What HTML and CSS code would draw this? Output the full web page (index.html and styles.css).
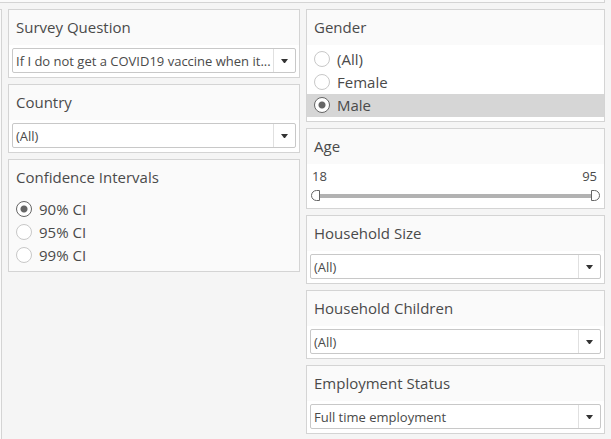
FILE: index.html
```html
<!DOCTYPE html>
<html lang="en">
<head>
<meta charset="utf-8">
<title>Survey filters</title>
<link rel="stylesheet" href="styles.css">
</head>
<body>
<div class="top-edge"></div>
<main class="dashboard">
  <div class="side-edge"></div>
  <div class="column column-left">
    <section class="panel">
      <label class="title" for="question">Survey Question</label>
      <div class="body">
        <div class="dropdown">
          <select id="question"><option>If I do not get a COVID19 vaccine when it...</option></select>
          <span class="arrow"><svg width="7" height="4" viewBox="0 0 7 4"><path d="M0 0h7L4 4H3z"/></svg></span>
        </div>
      </div>
    </section>
    <section class="panel">
      <label class="title" for="country">Country</label>
      <div class="body">
        <div class="dropdown">
          <select id="country"><option>(All)</option></select>
          <span class="arrow"><svg width="7" height="4" viewBox="0 0 7 4"><path d="M0 0h7L4 4H3z"/></svg></span>
        </div>
      </div>
    </section>
    <section class="panel" role="radiogroup" aria-labelledby="ci-title">
      <h2 class="title" id="ci-title">Confidence Intervals</h2>
      <div class="body body-plain">
        <label class="choice"><input type="radio" name="ci" checked>90% CI</label>
        <label class="choice"><input type="radio" name="ci">95% CI</label>
        <label class="choice"><input type="radio" name="ci">99% CI</label>
      </div>
    </section>
  </div>
  <div class="column column-right">
    <section class="panel" role="radiogroup" aria-labelledby="gender-title">
      <h2 class="title" id="gender-title">Gender</h2>
      <div class="body">
        <label class="choice"><input type="radio" name="gender">(All)</label>
        <label class="choice"><input type="radio" name="gender">Female</label>
        <label class="choice choice-active"><input type="radio" name="gender" checked>Male</label>
      </div>
    </section>
    <section class="panel">
      <h2 class="title">Age</h2>
      <div class="body">
        <div class="range-values">
          <label for="age-min">18</label>
          <label for="age-max">95</label>
        </div>
        <div class="range">
          <input class="range-min" id="age-min" type="range" min="18" max="95" value="18">
          <input class="range-max" id="age-max" type="range" min="18" max="95" value="95">
        </div>
      </div>
    </section>
    <section class="panel">
      <label class="title" for="size">Household Size</label>
      <div class="body">
        <div class="dropdown">
          <select id="size"><option>(All)</option></select>
          <span class="arrow"><svg width="7" height="4" viewBox="0 0 7 4"><path d="M0 0h7L4 4H3z"/></svg></span>
        </div>
      </div>
    </section>
    <section class="panel">
      <label class="title" for="children">Household Children</label>
      <div class="body">
        <div class="dropdown">
          <select id="children"><option>(All)</option></select>
          <span class="arrow"><svg width="7" height="4" viewBox="0 0 7 4"><path d="M0 0h7L4 4H3z"/></svg></span>
        </div>
      </div>
    </section>
    <section class="panel">
      <label class="title" for="employment">Employment Status</label>
      <div class="body">
        <div class="dropdown">
          <select id="employment"><option>Full time employment</option></select>
          <span class="arrow"><svg width="7" height="4" viewBox="0 0 7 4"><path d="M0 0h7L4 4H3z"/></svg></span>
        </div>
      </div>
    </section>
  </div>
</main>
</body>
</html>
```
FILE: styles.css
```css
* {
  box-sizing: border-box;
}

body {
  display: flex;
  flex-direction: column;
  min-height: 100vh;
  margin: 0;
  background: #f5f5f5;
  color: #4a4a4a;
  font-family: "Open Sans", "Noto Sans", sans-serif;
  font-size: 15px;
}

.top-edge {
  height: 3px;
  margin-right: 6px;
  border: solid #d4d4d4;
  border-width: 0 1px 1px 0;
  background: #fafafa;
}

.dashboard {
  flex: 1;
  display: flex;
  gap: 6px;
  padding: 6px 6px 0 0;
}

.side-edge {
  width: 2px;
  border: solid #d4d4d4;
  border-width: 1px 1px 0 0;
  background: #fafafa;
}

.column {
  display: flex;
  flex-direction: column;
  gap: 6px;
  min-width: 0;
}

.column-left {
  flex: 292 1 0;
}

.column-right {
  flex: 299 1 0;
}

.panel {
  border: 1px solid #d4d4d4;
  background: #fafafa;
}

.title {
  display: block;
  margin: 0;
  padding: 0 7px;
  font-size: 15px;
  font-weight: 400;
  line-height: 35px;
}

.body {
  padding: 3px 0 4px;
  background: #fff;
}

.body-plain {
  background: none;
}

.dropdown {
  position: relative;
  margin: 0 3px;
}

.dropdown select {
  display: block;
  width: 100%;
  height: 25px;
  margin: 0;
  padding: 0 22px 0 3px;
  border: 1px solid #c8c8c8;
  border-radius: 2px;
  appearance: none;
  background: #fff;
  color: inherit;
  font: inherit;
  font-size: 13px;
}

.arrow {
  position: absolute;
  top: 1px;
  right: 1px;
  bottom: 1px;
  display: flex;
  align-items: center;
  justify-content: center;
  width: 22px;
  border-left: 1px solid #e0e0e0;
  fill: #333;
  pointer-events: none;
}

.choice {
  display: flex;
  align-items: center;
  gap: 7px;
  height: 23px;
  padding: 0 7px 1px;
  line-height: 20px;
}

.choice-active {
  background: #d6d6d6;
}

.choice input {
  width: 16px;
  height: 16px;
  margin: 0;
  border: 1px solid #c8c8c8;
  border-radius: 50%;
  appearance: none;
  background: #fff;
}

.choice input:checked {
  border-color: #666;
  background: radial-gradient(circle, #666 3px, #fff 4px);
}

.range-values {
  display: flex;
  justify-content: space-between;
  padding: 0 7px 2px 5px;
  font-size: 13px;
  line-height: 18px;
}

.range {
  display: grid;
  margin: 0 4px;
  padding: 3px 0;
}

.range input {
  grid-area: 1 / 1;
  width: 100%;
  height: 11px;
  margin: 0;
  appearance: none;
  background: linear-gradient(#b2b2b2, #b2b2b2) center / calc(100% - 18px) 4px no-repeat;
  pointer-events: none;
}

.range .range-max {
  background: none;
}

.range input::-webkit-slider-thumb {
  width: 9px;
  height: 11px;
  border: 1px solid #666;
  border-radius: 6px 0 0 6px;
  appearance: none;
  background: #fff;
  pointer-events: auto;
}

.range .range-max::-webkit-slider-thumb {
  border-radius: 0 6px 6px 0;
}
```
